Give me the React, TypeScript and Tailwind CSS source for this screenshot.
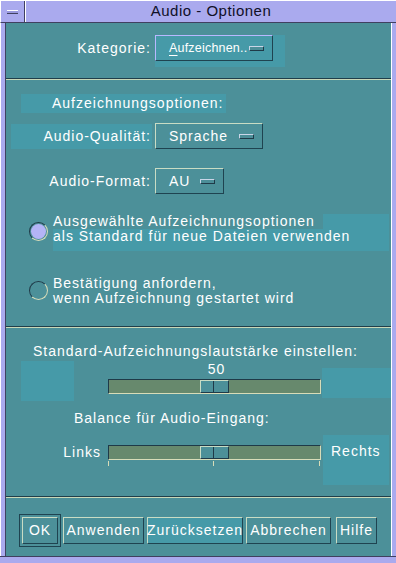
import React from 'react'

const font = "font-['Liberation_Sans',Arial,sans-serif] text-[14px] tracking-[1px]"

function Raised({ children, className }: { children?: React.ReactNode; className?: string }) {
  return (
    <div
      className={
        'border-t border-l border-t-[#c9dcc4] border-l-[#c9dcc4] border-b border-r border-b-[#1f4350] border-r-[#1f4350] ' +
        (className ?? '')
      }
    >
      {children}
    </div>
  )
}

function Indicator() {
  return (
    <span className="block shrink-0 w-[15px] h-[5px] border-t border-l border-b border-r border-t-[#c9d6e8] border-l-[#c9d6e8] border-b-[#1f3a48] border-r-[#1f3a48] bg-[#4c8e98]" />
  )
}

function OptionMenu({ label, width, lavender }: { label: React.ReactNode; width: string; lavender?: boolean }) {
  return (
    <div
      className={
        'flex items-center justify-between h-[26px] pl-[13px] pr-[8px] border-t border-l border-b border-r border-b-[#1f4350] border-r-[#1f4350] ' +
        (lavender ? 'border-t-[#b8b8ff] border-l-[#b8b8ff] pl-[2px] ' : 'border-t-[#c9dcc4] border-l-[#c9dcc4] ') +
        width
      }
    >
      <span className="text-white whitespace-nowrap">{label}</span>
      <Indicator />
    </div>
  )
}

function Radio({ on }: { on?: boolean }) {
  return (
    <span className="flex w-[19px] h-[19px] rounded-full border border-t-[#1f3a48] border-l-[#1f3a48] border-b-[#d8dcb8] border-r-[#d8dcb8] items-center justify-center shrink-0">
      {on && <span className="w-[15px] h-[15px] rounded-full bg-[#b4b4f6]" />}
    </span>
  )
}

function Slider() {
  return (
    <div className="relative w-[213px] h-[15px] bg-[#67896d] border-t border-l border-t-[#1f3a48] border-l-[#1f3a48] border-b border-r border-b-[#d8dcb8] border-r-[#d8dcb8]">
      <div className="absolute left-[91px] top-0 h-[13px] w-[29px] flex bg-[#4c9099] border-t border-l border-t-[#c9dcc4] border-l-[#c9dcc4] border-b border-r border-b-[#1f3a48] border-r-[#1f3a48]">
        <div className="w-[13px] h-full border-r border-[#1f3a48]" />
      </div>
    </div>
  )
}

function Sep() {
  return (
    <div className="shrink-0">
      <div className="h-px bg-[#1f3e4a]" />
      <div className="h-px bg-[#c9d8b8]" />
    </div>
  )
}

export default function App() {
  return (
    <div className={'w-[396px] h-[563px] flex flex-col bg-[#aaaaee] text-white ' + font}>
      {/* title bar */}
      <div className="h-[23px] flex border-t border-l border-white border-b border-b-[#404060] shrink-0">
        <div className="w-[24px] h-full border-r border-[#404060] flex items-center justify-center">
          <span className="block w-[11px] h-[4px] border-t border-white border-b border-b-[#404060] bg-[#9898dd]" />
        </div>
        <div className="flex-1 border-l border-white flex items-center justify-center text-[#101028] text-[15px] tracking-[0.5px]">
          Audio - Optionen
        </div>
      </div>

      <div className="flex-1 flex px-[4px] border-l border-white">
        <div className="flex-1 flex flex-col bg-[#4c9099] border-l border-[#404060] border-r border-r-white">
          {/* Kategorie */}
          <div className="h-[55px] flex items-start pt-[12px] shrink-0">
            <div className="w-[146px] text-right h-[26px] leading-[26px] pr-[1px]">Kategorie:</div>
            <div className="ml-[3px] bg-[#469aa8] pr-[12px] pb-[6px]">
              <OptionMenu
                lavender
                width="w-[118px] tracking-[0.2px] text-[12.5px]"
                label={
                  <>
                    <span className="underline underline-offset-[3px]">A</span>ufzeichnen..
                  </>
                }
              />
            </div>
          </div>
          <Sep />

          {/* Aufzeichnungsoptionen */}
          <div className="h-[246px] flex flex-col shrink-0">
            <div className="mt-[14px] ml-[15px] w-[205px] h-[19px] bg-[#469aa8] leading-[19px] pl-[31px]">
              Aufzeichnungsoptionen:
            </div>
            <div className="flex items-center mt-[10px]">
              <div className="ml-[5px] w-[141px] h-[25px] bg-[#469aa8] text-right leading-[25px] pr-[1px]">Audio-Qualität:</div>
              <div className="ml-[3px]">
                <OptionMenu width="w-[108px]" label="Sprache" />
              </div>
            </div>
            <div className="flex items-center mt-[19px]">
              <div className="w-[146px] text-right leading-[25px] pr-[1px]">Audio-Format:</div>
              <div className="ml-[3px]">
                <OptionMenu width="w-[69px]" label="AU" />
              </div>
            </div>
            <div className="flex items-start mt-[20px] ml-[23px]">
              <div className="mt-[8px]">
                <Radio on />
              </div>
              <div className="ml-[5px] leading-[15px] bg-[#469aa8] w-[336px] h-[37px]">
                <div className="bg-[#4c9099] w-[270px]">Ausgewählte Aufzeichnungsoptionen</div>
                <div>als Standard für neue Dateien verwenden</div>
              </div>
            </div>
            <div className="flex items-start mt-[25px] ml-[23px]">
              <div className="mt-[5px]">
                <Radio />
              </div>
              <div className="ml-[5px] leading-[15px]">
                <div>Bestätigung anfordern,</div>
                <div>wenn Aufzeichnung gestartet wird</div>
              </div>
            </div>
          </div>
          <Sep />

          {/* Lautstärke */}
          <div className="h-[168px] flex flex-col shrink-0">
            <div className="mt-[16px] ml-[27px] leading-[14px]">Standard-Aufzeichnungslautstärke einstellen:</div>
            <div className="flex items-start mt-[4px]">
              <div className="ml-[15px] mt-[-1px] w-[53px] h-[40px] bg-[#469aa8]" />
              <div className="ml-[34px] flex flex-col items-center w-[213px]">
                <div className="leading-[14px] h-[17px] ml-[4px]">50</div>
                <Slider />
              </div>
              <div className="ml-[1px] mt-[6px] w-[69px] h-[30px] bg-[#469aa8]" />
            </div>
            <div className="mt-[10px] ml-[68px] leading-[14px]">Balance für Audio-Eingang:</div>
            <div className="flex items-start mt-[20px]">
              <div className="w-[98px] text-right pr-[3px] leading-[15px]">Links</div>
              <div className="ml-[4px] flex flex-col">
                <Slider />
                <div className="relative h-[7px]">
                  <span className="absolute left-0 top-[1px] w-px h-[5px] bg-[#d8dcb8]" />
                  <span className="absolute left-[105px] top-[1px] w-px h-[5px] bg-[#d8dcb8]" />
                  <span className="absolute left-[211px] top-[1px] w-px h-[5px] bg-[#d8dcb8]" />
                </div>
              </div>
              <div className="ml-[2px] mt-[-10px] w-[66px] h-[50px] bg-[#469aa8] pl-[8px] pt-[9px] leading-[15px]">
                Rechts
              </div>
            </div>
          </div>
          <Sep />

          {/* Buttons */}
          <div className="flex-1 flex items-start pt-[16px] pl-[13px]">
            <div className="border border-[#1f4350] p-[2px]">
              <Raised className="w-[36px] h-[27px] flex items-center justify-center">OK</Raised>
            </div>
            <div className="flex items-start mt-[3px]">
              <Raised className="ml-[2px] w-[81px] h-[27px] flex items-center justify-center">Anwenden</Raised>
              <Raised className="ml-[3px] w-[96px] h-[27px] flex items-center justify-center bg-[#469aa8]">Zurücksetzen</Raised>
              <Raised className="ml-[3px] w-[85px] h-[27px] flex items-center justify-center">Abbrechen</Raised>
              <Raised className="ml-[5px] w-[41px] h-[27px] flex items-center justify-center">Hilfe</Raised>
            </div>
          </div>
        </div>
      </div>
      <div className="h-[7px] border-t border-[#404060] shrink-0" />
    </div>
  )
}
